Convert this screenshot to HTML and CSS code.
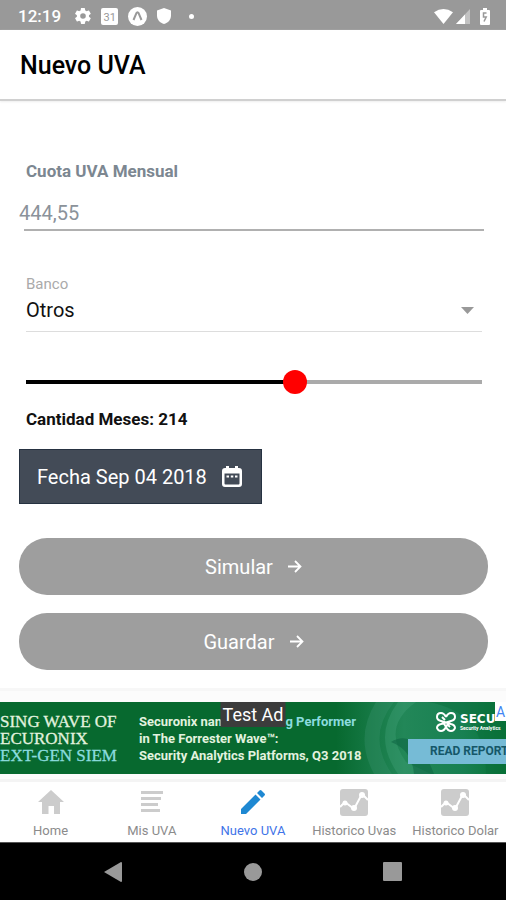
FILE: index.html
```html
<!DOCTYPE html>
<html lang="es">
<head>
<meta charset="utf-8">
<meta name="viewport" content="width=device-width, initial-scale=1">
<title>Nuevo UVA</title>
<link rel="stylesheet" href="styles.css">
</head>
<body>
<div class="app">
  <div class="status">
    <span class="clock">12:19</span>
    <svg width="16" height="16" viewBox="2 2 20 20" fill="currentColor" aria-hidden="true"><path d="M19.4 13c0-.3.1-.6.1-1s0-.7-.1-1l2.100-1.600c.2-.2.2-.4.1-.6l-2-3.500c-.1-.2-.4-.3-.6-.2l-2.500 1c-.5-.4-1.100-.7-1.700-1l-.4-2.600c0-.2-.2-.5-.5-.5h-4c-.2 0-.5.2-.5.500l-.4 2.600c-.6.300-1.200.600-1.700 1l-2.500-1c-.2-.1-.5 0-.6.200l-2 3.500c-.1.200-.1.500.1.600l2.100 1.600c0 .3-.1.600-.1 1s0 .7.100 1l-2.100 1.600c-.2.200-.2.400-.1.600l2 3.500c.1.200.4.300.6.200l2.500-1c.5.400 1.100.7 1.700 1l.4 2.600c0 .200.2.500.5.500h4c.3 0 .5-.2.500-.500l.4-2.600c.6-.3 1.200-.6 1.700-1l2.500 1c.2.100.5 0 .6-.2l2-3.500c.1-.2.1-.5-.1-.6zM12 15.500a3.500 3.500 0 1 1 0-7 3.500 3.500 0 0 1 0 7z"/></svg>
    <span class="day">31</span>
    <svg width="19" height="19" viewBox="0 0 19 19" aria-hidden="true"><circle cx="9.500" cy="9.500" r="9.500" fill="#fff"/><path d="M5.500 13 8.300 6.300Q9.500 4 10.700 6.300L13.500 13" fill="none" stroke="#999" stroke-width="2"/></svg>
    <svg width="14" height="16" viewBox="0 0 14 16" fill="currentColor" aria-hidden="true"><path d="M7 0 14 2.500V7.500C14 11.500 11 15 7 16 3 15 0 11.500 0 7.500V2.500z"/></svg>
    <span class="dot"></span>
    <span class="spacer"></span>
    <span class="signals">
      <svg width="19" height="15" viewBox="0 0 19 15" fill="currentColor" aria-hidden="true"><path d="M0 3.200Q9.500-3 19 3.200L9.500 15z"/></svg>
      <svg width="14" height="15" viewBox="0 0 14 15" fill="currentColor" aria-hidden="true"><path d="M0 15 14 0V15z" opacity=".4"/><path d="M0 15 9 5.400V15z"/></svg>
    </span>
    <svg width="10" height="17" viewBox="0 0 10 17" aria-hidden="true"><path d="M3 0h4v2h2q1 0 1 1v13q0 1-1 1H1q-1 0-1-1V3q0-1 1-1h2z" fill="#fff"/><path d="M6.500 5H3.500v4h2.700L4 13.500" fill="none" stroke="#999" stroke-width="1.500"/></svg>
  </div>

  <header class="bar"><h1>Nuevo UVA</h1></header>

  <main class="form">
    <label class="field-title" for="cuota">Cuota UVA Mensual</label>
    <input class="amount" id="cuota" type="text" placeholder="444,55">

    <div class="bank">
      <label for="banco">Banco</label>
      <div class="bank-box">
        <select id="banco"><option>Otros</option></select>
        <svg width="13" height="7" viewBox="0 0 13 7" aria-hidden="true"><path d="M0 0h13L6.500 7z" fill="#999"/></svg>
      </div>
    </div>

    <input class="months" id="meses" type="range" min="0" max="360" value="214">
    <label class="months-label" for="meses">Cantidad Meses: 214</label>

    <button class="date" type="button">Fecha Sep 04 2018
      <svg width="20" height="22" viewBox="0 0 20 22" aria-hidden="true"><path d="M3 2H4V0h3v2h6V0h3v2h1q3 0 3 3v13q0 3-3 3H3q-3 0-3-3V5q0-3 3-3zM2.500 7.500v10q0 1 1 1h13q1 0 1-1v-10z" fill="#fff" fill-rule="evenodd"/><path d="M4.500 10.500h2.500M8.800 10.500h2.500M13 10.500h2.500" stroke="#fff" stroke-width="2"/></svg>
    </button>

    <button class="pill" type="button">Simular
      <svg width="14" height="13" viewBox="0 0 14 13" aria-hidden="true"><path d="M0 6.500h12M7 1l5.500 5.500L7 12" fill="none" stroke="#fff" stroke-width="1.800"/></svg>
    </button>
    <button class="pill" type="button">Guardar
      <svg width="14" height="13" viewBox="0 0 14 13" aria-hidden="true"><path d="M0 6.500h12M7 1l5.500 5.500L7 12" fill="none" stroke="#fff" stroke-width="1.800"/></svg>
    </button>
  </main>

  <aside class="ad-strip">
    <div class="ad">
      <svg class="ad-art" width="170" height="72" viewBox="0 0 170 72" aria-hidden="true">
        <defs><linearGradient id="g"><stop offset="0" stop-color="#07692f"/><stop offset=".4" stop-color="#228758"/><stop offset=".75" stop-color="#188052"/><stop offset="1" stop-color="#087335"/></linearGradient></defs>
        <path d="M0 0h170v72H0z" fill="url(#g)"/>
        <path d="M58 0Q30 35 56 72H38Q18 35 40 0z" fill="#39936c" opacity=".35"/>
        <path d="M80 0Q45 25 70 60L95 72H62Q36 35 62 0z" fill="#45a27b" opacity=".35"/>
        <path d="M55 40Q80 25 98 72H78Q76 48 55 40z" fill="#0a6040" opacity=".5"/>
        <path d="M92 0Q150 10 150 72H170V0z" fill="#086c39" opacity=".45"/>
      </svg>
      <p class="slogan">SING WAVE OF<br>ECURONIX<br><span>EXT-GEN SIEM</span></p>
      <p class="pitch">Securonix named a <span>Strong Performer</span><br>in The Forrester Wave™:<br>Security Analytics Platforms, Q3 2018</p>
      <div class="sponsor">
        <div class="brand">
          <svg width="20" height="20" viewBox="0 0 20 20" fill="none" stroke="#fff" stroke-width="2" aria-hidden="true"><path d="M10 5Q8 1 5 1 1 1 1 5 1 8 5 9L15 12Q19 13 19 16 18 19 15 19 12 19 10 15L7 10M10 5Q12 1 15 1 19 1 19 5 19 8 15 9L5 12Q1 13 1 16 2 19 5 19 8 19 10 15L13 10M6 5 9 8M14 15 11 12"/></svg>
          <p>SECU<small>Security Analytics</small></p>
        </div>
        <a class="report" href="#">READ REPORT</a>
      </div>
      <span class="test">Test Ad</span>
      <span class="choice">A</span>
    </div>
  </aside>

  <nav class="tabs">
    <a href="#"><svg width="26" height="26" viewBox="0 0 26 26" fill="currentColor" aria-hidden="true"><path d="M13 1 26 13H22V25H16V17H10.500V25H4V13H0z"/></svg><span>Home</span></a>
    <a href="#"><svg width="26" height="26" viewBox="0 0 26 26" fill="currentColor" aria-hidden="true"><path d="M2 2h22v3H2zM2 8h20v3H2zM2 14h17v3H2zM2 20h19v3H2z"/></svg><span>Mis UVA</span></a>
    <a class="on" href="#" aria-current="page"><svg width="26" height="26" viewBox="0 0 26 26" fill="#1e88d2" aria-hidden="true"><path d="M1 20 15.500 5.500 20.500 10.500 6 25H1zM17 4 19.500 1.500Q20.500 .5 21.500 1.500L24.500 4.500Q25.500 5.500 24.500 6.500L22 9z"/></svg><span>Nuevo UVA</span></a>
    <a href="#"><svg width="28" height="28" viewBox="0 0 28 28" aria-hidden="true"><rect width="28" height="27" rx="3" fill="#ccc"/><path d="M0 18 5 13 14 20 22 5 28 11" fill="none" stroke="#fff" stroke-width="2"/><g fill="#fff"><circle cx="5" cy="14" r="2.500"/><circle cx="14" cy="19" r="3"/><circle cx="22" cy="6" r="3"/></g></svg><span>Historico Uvas</span></a>
    <a href="#"><svg width="28" height="28" viewBox="0 0 28 28" aria-hidden="true"><rect width="28" height="27" rx="3" fill="#ccc"/><path d="M0 18 5 13 14 20 22 5 28 11" fill="none" stroke="#fff" stroke-width="2"/><g fill="#fff"><circle cx="5" cy="14" r="2.500"/><circle cx="14" cy="19" r="3"/><circle cx="22" cy="6" r="3"/></g></svg><span>Historico Dolar</span></a>
  </nav>

  <div class="system">
    <button type="button" aria-label="Atrás"><svg width="20" height="22" viewBox="0 0 20 22"><path d="M1 11 18 1Q19 1 19 2V20Q19 21 18 21z" fill="#999"/></svg></button>
    <button type="button" aria-label="Inicio"><svg width="20" height="20" viewBox="0 0 20 20"><circle cx="10" cy="10" r="9" fill="#999"/></svg></button>
    <button type="button" aria-label="Recientes"><svg width="20" height="20" viewBox="0 0 20 20"><rect width="19" height="19" rx="1" fill="#999"/></svg></button>
  </div>
</div>
</body>
</html>
```
FILE: styles.css
```css
* { box-sizing: border-box; }
body, h1, p { margin: 0; }
body { font-family: Roboto, "Liberation Sans", sans-serif; background: #fff; color: #111; }
button, input, select { font: inherit; margin: 0; }
a { text-decoration: none; color: inherit; }
svg { display: block; flex: none; }
.app { display: flex; flex-direction: column; min-height: 100vh; overflow: hidden; }

.status { display: flex; align-items: center; gap: 10px; height: 30px; padding: 2px 16px 0 18px; background: #999; color: #fff; }
.clock { font-size: 17px; font-weight: 500; margin-right: 4px; }
.day { width: 17px; height: 17px; border-radius: 2px; background: #fff; color: #999; font-size: 11px; line-height: 19px; text-align: center; }
.dot { width: 5px; height: 5px; margin-left: 8px; border-radius: 50%; background: #fff; }
.spacer { flex: 1; }
.signals { display: flex; gap: 3px; }

.bar { display: flex; align-items: center; height: 71px; padding: 3px 20px 0; border-bottom: 2px solid #d0d0d0; box-shadow: 0 1px 2px #eee; }
h1 { font-size: 25px; font-weight: 500; line-height: 32px; color: #000; }

.form { display: flex; flex-direction: column; flex: 1; padding: 60px 18px 18px 19px; }
.field-title { margin-left: 7px; font-size: 17px; font-weight: 700; line-height: 20px; color: #7c8791; }
.amount { height: 46px; padding: 10px 0 0; border: 0; outline: 0; font-size: 20px; background: linear-gradient(#b0b0b0, #b0b0b0) 5px 100% / calc(100% - 9px) 2px no-repeat; margin-top: 4px; }
.amount::placeholder { color: #8b929a; opacity: 1; }

.bank { margin: 44px 6px 0 7px; font-size: 15px; line-height: 18px; color: #aaa; border-bottom: 1px solid #ddd; }
.bank label { display: block; }
.bank-box { display: flex; align-items: center; padding: 0 8px 4px 0; height: 38px; }
.bank-box select { flex: 1; height: 34px; padding: 0; border: 0; outline: 0; appearance: none; background: none; font-size: 20px; color: #111; }

.months { appearance: none; height: 24px; margin: 38px 6px 0 7px; background: linear-gradient(to right, #000 59%, #aaa 59%) center / 100% 4px no-repeat; }
.months::-webkit-slider-thumb { appearance: none; width: 24px; height: 24px; border-radius: 50%; background: #f00; }
.months-label { margin: 15px 0 0 7px; font-size: 17px; font-weight: 700; line-height: 20px; color: #111; }

.date { display: flex; align-items: center; align-self: flex-start; gap: 15px; height: 55px; margin: 20px 0 34px; padding: 0 19px 0 17px; border: 1px solid #263241; background: #434b57; color: #fff; font-size: 20px; }
.pill { display: flex; align-items: center; justify-content: center; gap: 15px; height: 57px; padding: 0; border: 0; border-radius: 28px; background: #9e9e9e; color: #fff; font-size: 20px; }
.pill + .pill { margin-top: 18px; }

.ad-strip { padding: 11px 0 5px; background: #fcfcfc; border-top: 3px solid #f7f7f7; border-bottom: 3px solid #f4f4f4; }
.ad { position: relative; display: flex; align-items: center; height: 72px; overflow: hidden; background: #07692f; color: #e2f2df; white-space: nowrap; }
.ad-art { position: absolute; top: 0; right: 0; }
.slogan { width: 139px; font-family: "Liberation Serif", serif; font-size: 17px; line-height: 17px; -webkit-text-stroke: 0.3px; }
.slogan span, .pitch span { color: #8bdcdf; }
.pitch { position: relative; flex: 1; font-size: 13px; font-weight: 700; line-height: 17px; }
.sponsor { position: relative; width: 98px; }
.brand { display: flex; align-items: center; gap: 4px; margin: 0 0 7px 28px; color: #fff; font-family: "DejaVu Sans", sans-serif; font-size: 12px; font-weight: 700; line-height: 12px; }
.brand small { display: block; max-width: 46px; font-family: Roboto, sans-serif; font-size: 5px; line-height: 6px; }
.report { display: block; height: 25px; padding-left: 22px; background: #76bbd6; color: #155768; font-size: 12px; font-weight: 700; line-height: 25px; }
.test { position: absolute; top: 0; left: 50%; transform: translateX(-50%); padding: 0 2px; background: #3c3c3c; color: #fff; font-size: 18px; line-height: 25px; }
.choice { position: absolute; top: 0; right: 0; width: 11px; height: 19px; padding-left: 1px; background: #fff; color: #4285f4; font-size: 14px; line-height: 21px; }

.tabs { display: grid; grid-template-columns: repeat(5, 1fr); height: 60px; }
.tabs a { display: flex; flex-direction: column; align-items: center; justify-content: space-between; padding: 7px 0 3px; font-size: 13px; line-height: 16px; color: #ccc; white-space: nowrap; }
.tabs span { color: #8b8b8b; }
.tabs .on span { color: #3f74e8; }

.system { display: flex; justify-content: center; gap: 120px; height: 58px; background: #000; border-top: 1px solid #555; }
.system button { display: flex; align-items: center; padding: 0; border: 0; background: none; }
```
